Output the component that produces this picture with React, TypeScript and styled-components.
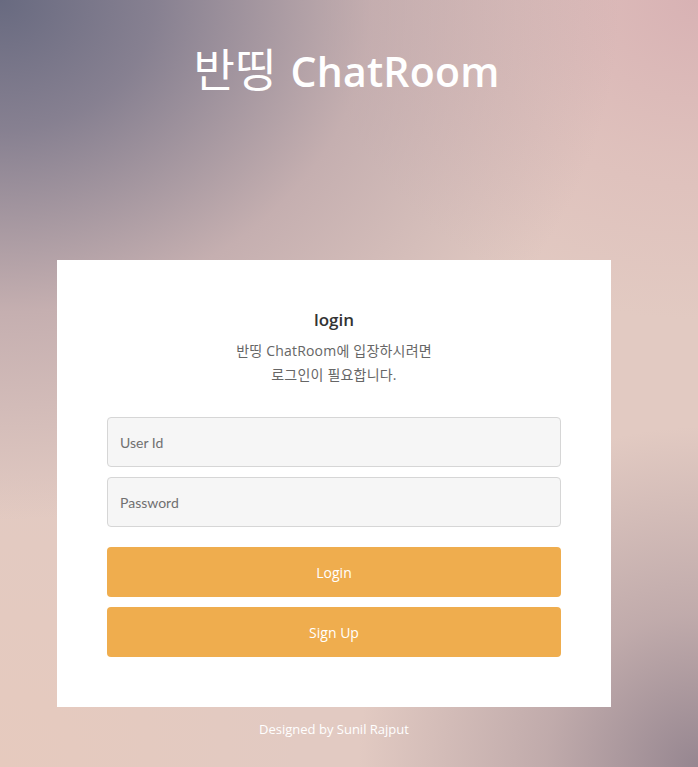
import React from "react";
import styled, { createGlobalStyle } from "styled-components";

const GlobalStyle = createGlobalStyle`
  html, body {
    margin: 0;
    padding: 0;
  }
  body {
    font-family: "Open Sans", "Noto Sans CJK KR", sans-serif;
  }
  * { box-sizing: border-box; }
`;

const Page = styled.div`
  min-height: 767px;
  display: flex;
  flex-direction: column;
  background:
    radial-gradient(ellipse 620px 520px at 0% 0%, rgba(104, 106, 128, 1) 0%, rgba(122, 118, 138, 0.88) 25%, rgba(168, 148, 158, 0.5) 60%, rgba(228, 203, 193, 0) 100%),
    radial-gradient(ellipse 340px 340px at 100% 100%, rgba(150, 134, 144, 1) 0%, rgba(170, 150, 156, 0.6) 45%, rgba(228, 203, 193, 0) 100%),
    radial-gradient(ellipse 380px 320px at 100% 0%, rgba(216, 178, 180, 1) 0%, rgba(220, 186, 184, 0.6) 50%, rgba(228, 203, 193, 0) 100%),
    radial-gradient(ellipse 300px 300px at 0% 100%, rgba(230, 202, 190, 1) 0%, rgba(228, 203, 193, 0) 100%),
    #e2cac2;
`;

const Title = styled.h1`
  margin: 40px 0 0;
  padding-right: 5px;
  text-align: center;
  color: #ffffff;
  font-size: 41px;
  font-weight: 600;
  line-height: 60px;
  letter-spacing: 0.2px;
  word-spacing: 3px;
`;

const TitleKo = styled.span`
  font-weight: 400;
  font-size: 45px;
`;

const Main = styled.div`
  margin: 159px 0 0 57px;
  width: 554px;
  display: flex;
  flex-direction: column;
`;

const Card = styled.div`
  background: #ffffff;
  padding: 48px 50px 50px;
  display: flex;
  flex-direction: column;
`;

const Heading = styled.h3`
  margin: 0;
  text-align: center;
  color: #333333;
  font-size: 17px;
  font-weight: 600;
  line-height: 24px;
`;

const Subtitle = styled.p`
  margin: 7px 0 0;
  text-align: center;
  color: #666666;
  font-size: 14px;
  line-height: 24px;
  letter-spacing: 0.2px;
`;

const Form = styled.form`
  margin-top: 30px;
  display: flex;
  flex-direction: column;
  gap: 10px;
`;

const Input = styled.input`
  height: 50px;
  width: 100%;
  padding: 0 12px;
  background: #f6f6f6;
  border: 1px solid #d6d6d6;
  border-radius: 4px;
  font-family: Lato, "Open Sans", sans-serif;
  font-size: 14px;
  color: #333;
  outline: none;
  &::placeholder {
    color: #707070;
  }
`;

const Button = styled.button<{ $first?: boolean }>`
  height: 50px;
  width: 100%;
  margin-top: ${(p) => (p.$first ? "10px" : "0")};
  border: none;
  border-radius: 4px;
  background: #efad4e;
  color: #ffffff;
  font-family: "Open Sans", sans-serif;
  font-size: 14px;
  cursor: pointer;
`;

const Footer = styled.p`
  margin: 14px 0 0;
  text-align: center;
  color: #ffffff;
  font-size: 13px;
  line-height: 16px;
`;

export default function App() {
  return (
    <>
      <GlobalStyle />
      <Page>
        <Title>
          <TitleKo>반띵</TitleKo> ChatRoom
        </Title>
        <Main>
          <Card>
            <Heading>login</Heading>
            <Subtitle>
              반띵 ChatRoom에 입장하시려면
              <br />
              로그인이 필요합니다.
            </Subtitle>
            <Form onSubmit={(e) => e.preventDefault()}>
              <Input type="text" placeholder="User Id" />
              <Input type="password" placeholder="Password" />
              <Button type="submit" $first>
                Login
              </Button>
              <Button type="button">Sign Up</Button>
            </Form>
          </Card>
          <Footer>Designed by Sunil Rajput</Footer>
        </Main>
      </Page>
    </>
  );
}
